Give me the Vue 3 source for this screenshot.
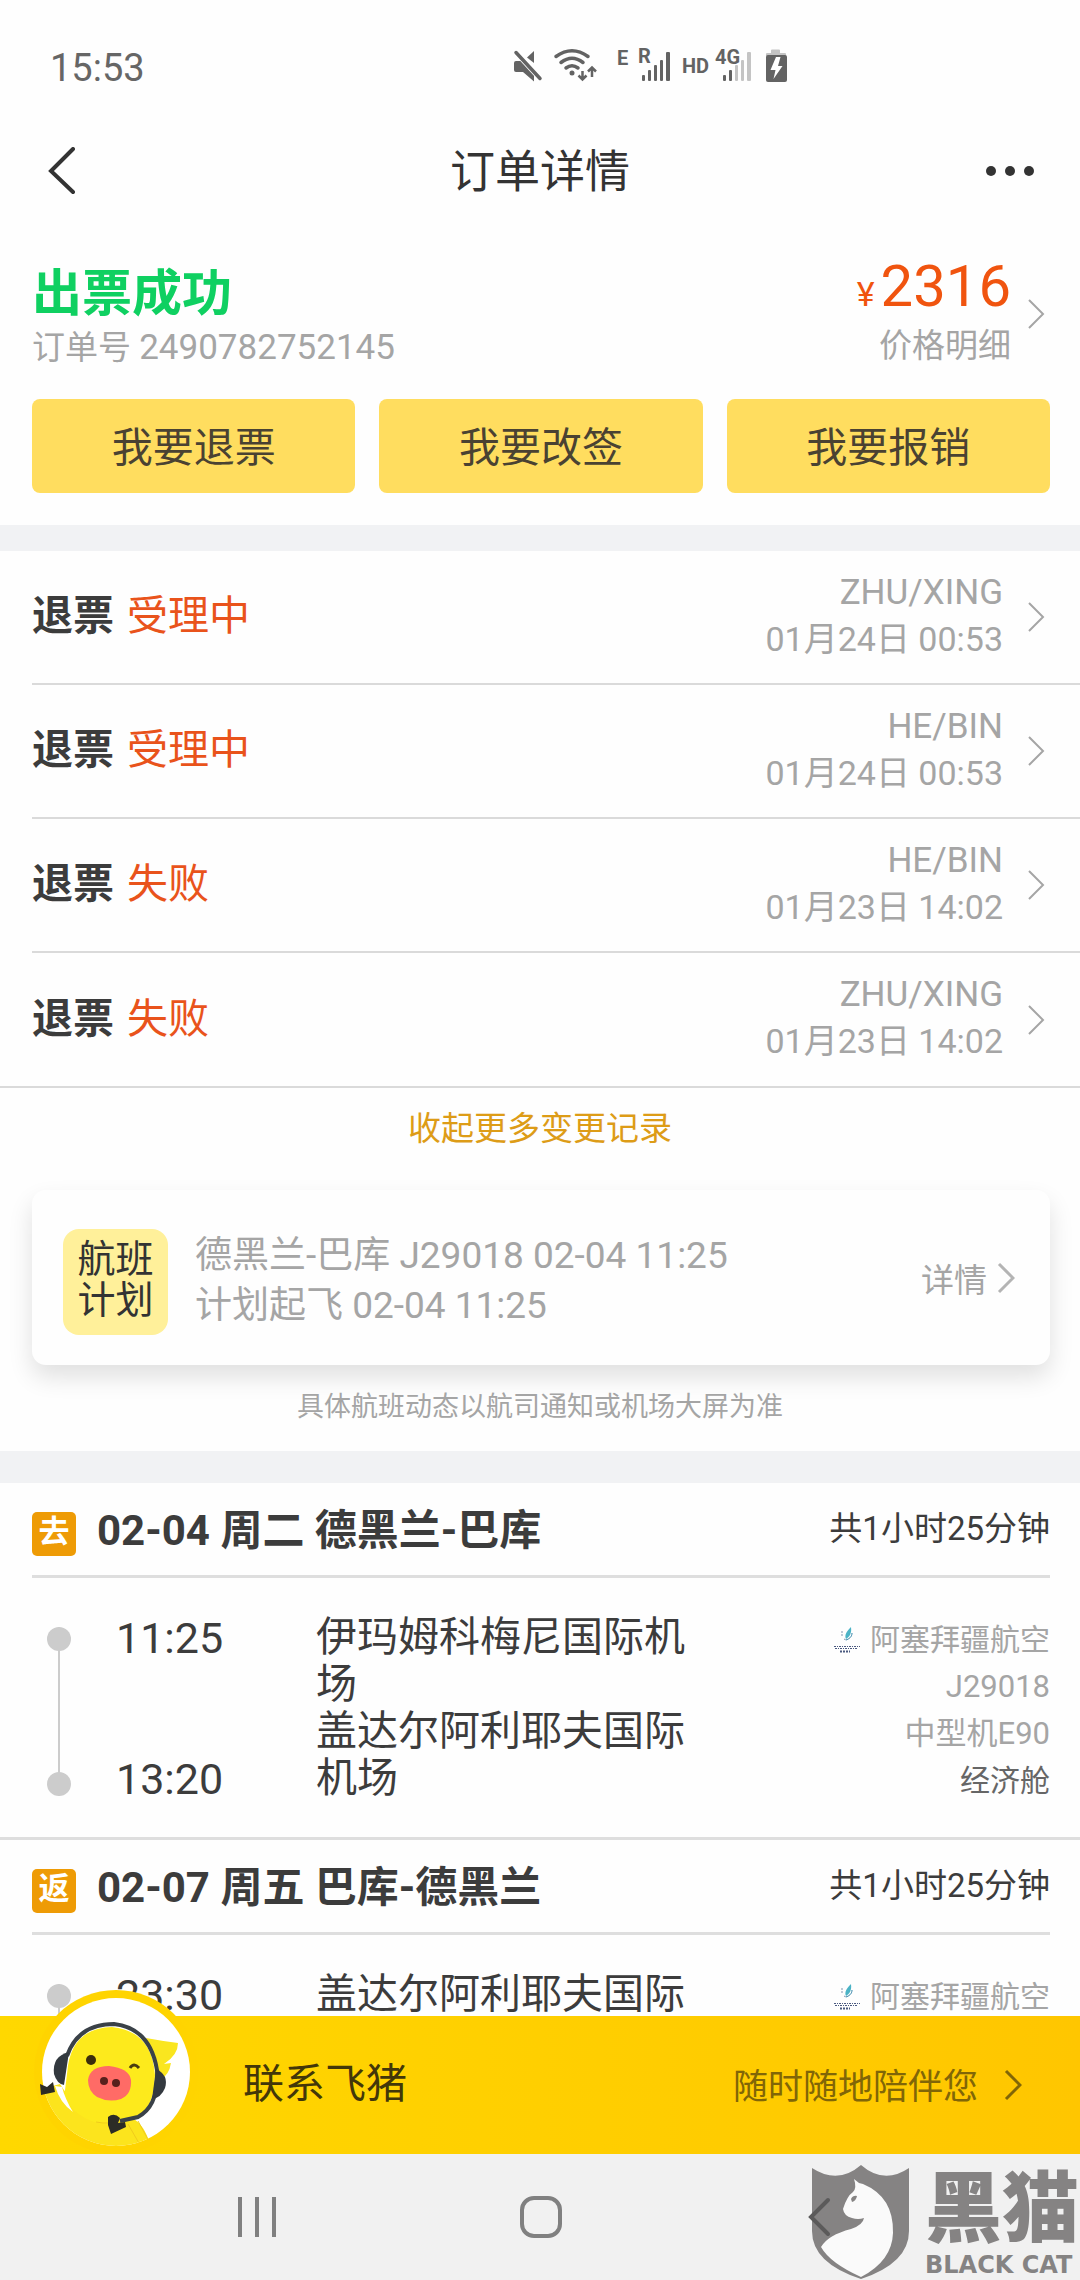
<script setup>
const actions = ['我要退票', '我要改签', '我要报销']

const records = [
  { status: '受理中', name: 'ZHU/XING', time: '01月24日 00:53' },
  { status: '受理中', name: 'HE/BIN', time: '01月24日 00:53' },
  { status: '失败', name: 'HE/BIN', time: '01月23日 14:02' },
  { status: '失败', name: 'ZHU/XING', time: '01月23日 14:02' },
]

const flights = [
  {
    tag: '去',
    title: '02-04 周二 德黑兰-巴库',
    duration: '共1小时25分钟',
    stops: [
      { time: '11:25', airport: '伊玛姆科梅尼国际机场' },
      { time: '13:20', airport: '盖达尔阿利耶夫国际机场' },
    ],
    airline: '阿塞拜疆航空',
    details: ['J29018', '中型机E90'],
    cabin: '经济舱',
  },
  {
    tag: '返',
    title: '02-07 周五 巴库-德黑兰',
    duration: '共1小时25分钟',
    stops: [{ time: '23:30', airport: '盖达尔阿利耶夫国际机场' }],
    airline: '阿塞拜疆航空',
    details: [],
    cabin: '',
  },
]
</script>

<template>
  <div class="screen">
    <div class="status-bar">
      <span class="clock">15:53</span>
      <svg class="indicators" viewBox="0 0 280 40" aria-hidden="true">
        <g fill="#636363">
          <path d="M0 16q0-2 2-2h7L20 25V34.500L9 25H2q-2 0-2-2z" />
          <path d="M20 4v12L13 10.500z" />
          <path d="M3 6L26 31" stroke="#fff" stroke-width="6" />
          <path d="M2 5.500L26 31.500" stroke="#636363" stroke-width="3.500" stroke-linecap="round" />
        </g>
        <g fill="none" stroke="#636363" stroke-width="3.500" stroke-linecap="round">
          <path d="M42 9.500Q58-2 74 9.500" />
          <path d="M47 15.500Q58 7 69 15.500" />
          <path d="M52 21Q58 16.500 64 21" />
        </g>
        <circle cx="58" cy="26" r="2.500" fill="#636363" />
        <g fill="none" stroke="#636363" stroke-width="2.500">
          <path d="M68.500 24v8M64.500 28.500l4 4 4-4M78 30v-9M74 24.500l4-4 4 4" />
        </g>
        <g fill="#c4c4c4">
          <rect x="221" y="18" width="3" height="16" rx="1" />
          <rect x="227" y="13" width="3" height="21" rx="1" />
          <rect x="233" y="5" width="4" height="29" rx="1" />
          <path d="M252 9V7q0-1 1-1h4V3.500q0-1 1-1h7q1 0 1 1V6h5q1 0 1 1v2z" />
        </g>
        <g fill="#636363">
          <text x="103" y="18" class="ind">E</text>
          <text x="124" y="16" class="ind">R</text>
          <text x="168" y="26" class="ind">HD</text>
          <text x="201" y="17" class="ind">4G</text>
          <rect x="128" y="28" width="3" height="6" rx="1" />
          <rect x="134" y="23" width="3" height="11" rx="1" />
          <rect x="140" y="18" width="3" height="16" rx="1" />
          <rect x="146" y="13" width="3" height="21" rx="1" />
          <rect x="152" y="5" width="4" height="29" rx="1" />
          <rect x="209" y="28" width="3" height="6" rx="1" />
          <rect x="215" y="23" width="3" height="11" rx="1" />
        </g>
        <rect x="252" y="8" width="21" height="27" rx="2" fill="#636363" />
        <path d="M262 10l-5.500 13h5L259.500 32 268.500 19h-4.500L266.500 10z" fill="#fff" />
      </svg>
    </div>

    <header class="nav">
      <button class="icon-btn back" aria-label="返回">
        <svg width="28" height="48" viewBox="0 0 28 48"><path d="M25 2L3 24 25 45" /></svg>
      </button>
      <h1>订单详情</h1>
      <button class="icon-btn more" aria-label="更多">
        <svg width="50" height="12" viewBox="0 0 50 12">
          <circle cx="6" cy="6" r="5" /><circle cx="25" cy="6" r="5" /><circle cx="44" cy="6" r="5" />
        </svg>
      </button>
    </header>

    <main class="content">
      <section class="summary">
        <div class="summary-top">
          <div>
            <h2>出票成功</h2>
            <p class="order">订单号 <span>2490782752145</span></p>
          </div>
          <a href="#" class="price-link">
            <span class="price-text">
              <span class="price"><small>¥</small>2316</span>
              <span class="price-label">价格明细</span>
            </span>
            <svg class="chev" viewBox="0 0 18 32"><path d="M2 2l14 14L2 30" /></svg>
          </a>
        </div>
        <div class="actions">
          <button v-for="a in actions" :key="a">{{ a }}</button>
        </div>
      </section>

      <section class="records">
        <a v-for="(r, i) in records" :key="i" href="#" class="record">
          <span class="record-state"><b>退票</b><em>{{ r.status }}</em></span>
          <span class="record-info">
            <span class="passenger">{{ r.name }}</span>
            <span>{{ r.time }}</span>
          </span>
          <svg class="chev" viewBox="0 0 18 32"><path d="M2 2l14 14L2 30" /></svg>
        </a>
      </section>
      <button class="collapse">收起更多变更记录</button>

      <a href="#" class="plan">
        <span class="plan-badge">航班<br />计划</span>
        <span class="plan-text">
          <span>德黑兰-巴库 J29018 02-04 11:25</span>
          <span>计划起飞 02-04 11:25</span>
        </span>
        <span class="plan-more">详情</span>
        <svg class="chev bold" viewBox="0 0 18 32"><path d="M2 2l14 14L2 30" /></svg>
      </a>
      <p class="notice">具体航班动态以航司通知或机场大屏为准</p>

      <section v-for="f in flights" :key="f.tag" class="flight">
        <div class="flight-head">
          <span class="tag">{{ f.tag }}</span>
          <h3>{{ f.title }}</h3>
          <span class="duration">{{ f.duration }}</span>
        </div>
        <div class="flight-body">
          <div class="track"></div>
          <div class="times">
            <span v-for="s in f.stops" :key="s.time">{{ s.time }}</span>
          </div>
          <div class="airports">
            <span v-for="s in f.stops" :key="s.time">{{ s.airport }}</span>
          </div>
          <div class="meta">
            <span class="airline">
              <svg width="28" height="30" viewBox="0 0 28 30" aria-hidden="true">
                <path d="M18 2c-4 4-7 8-5 12 3-2 6-5 5-12z" fill="#4bb3c6" />
                <path d="M19 8c0 4-3 6-6 7" fill="none" stroke="#2b7fa5" />
                <path d="M9 6v6M11 14l2 1" fill="none" stroke="#8095b0" stroke-dasharray="2 1" />
                <path d="M1 21.500h26M2 23.500h23" stroke="#4b5a80" stroke-dasharray="2 1 1 1" />
                <path d="M7 26.500h10" stroke="#4b5a80" stroke-width="2" stroke-dasharray="2 1" />
              </svg>
              {{ f.airline }}
            </span>
            <span v-for="d in f.details" :key="d" class="detail">{{ d }}</span>
            <span v-if="f.cabin" class="cabin">{{ f.cabin }}</span>
          </div>
        </div>
      </section>
    </main>

    <a href="#" class="contact">
      <svg class="avatar" viewBox="0 0 164 164" aria-hidden="true">
        <defs>
          <clipPath id="face"><circle cx="82" cy="82" r="74" /></clipPath>
        </defs>
        <circle cx="82" cy="82" r="82" fill="#ffd400" />
        <circle cx="82" cy="82" r="74" fill="#fff" />
        <g clip-path="url(#face)">
          <path d="M4 100L26 94 42 118 74 132 98 128Q110 134 116 154L90 164 20 164Z" fill="#fce41d" />
          <path d="M112 48q16 3 32 5 0 12-14 21l7-1q-2 12-10 16z" fill="#fae61f" />
          <path d="M33 84Q36 38 78 37q40 4 43 48 0 44-36 49Q50 138 30 108z" fill="#fdea1c" />
          <path d="M21 96q5 17 18 26-8-13-11-25z" fill="#fff" />
          <path d="M94 134l16 28M104 131l14 26M62 132q14 3 26-2" fill="none" stroke="#efcb1c" />
        </g>
        <path d="M33 66Q44 34 80 34q36 4 43 46 2 36-19 47l-18 4" fill="none" stroke="#3a4148" stroke-width="4" />
        <path d="M35 62Q18 66 20 84q3 10 10 11z" fill="#33393f" />
        <path d="M122 79q13 6 9 19-4 10-13 11z" fill="#33393f" />
        <circle cx="57" cy="70" r="5" fill="#3b2d0c" />
        <path d="M96 78q4-6 9 0" fill="none" stroke="#4a3c10" stroke-width="3" />
        <path d="M54 90q2-14 21-14 20 2 22 14 1 14-10 19-12 4-24-2-9-6-9-17z" fill="#ff6b66" />
        <circle cx="70" cy="91" r="4" fill="#57201c" />
        <circle cx="82" cy="93" r="4" fill="#57201c" />
        <path d="M6 94l7 3 6-5 2 10-14 3z" fill="#2c2c26" />
        <path d="M74 127q6-5 12 1l-2 5 7-1 1 5-15 7-3-9z" fill="#2c2c26" />
      </svg>
      <span class="contact-name">联系飞猪</span>
      <span class="contact-slogan">随时随地陪伴您</span>
      <svg class="chev" viewBox="0 0 18 32"><path d="M2 2l14 14L2 30" /></svg>
    </a>

    <footer class="system">
      <button aria-label="最近任务">
        <svg width="40" height="44" viewBox="0 0 40 44"><path d="M3 2v40M20 2v40M37 2v40" /></svg>
      </button>
      <button aria-label="主屏幕">
        <svg width="44" height="44" viewBox="0 0 44 44"><rect x="3" y="3" width="38" height="38" rx="12" /></svg>
      </button>
      <button class="sys-back" aria-label="返回">
        <svg width="28" height="44" viewBox="0 0 28 44"><path d="M24 5L7 22 24 39" /></svg>
      </button>
      <div class="brand">
        <svg width="98" height="114" viewBox="0 0 98 114" aria-hidden="true">
          <path d="M0 3Q26 20 49 0 72 20 97 3V66Q97 98 49 114 0 98 0 66z" fill="#858383" />
          <path d="M42 14l5 4 4 1Q82 32 81 68q-1 28-32 44Q18 98 9 82q7-12 30-18 12-4 13-11-6 2-12 0-8-2-9-9 4-13 10-17 4-4 1-13z" fill="#fafafa" />
          <path d="M39 34q2-4 6-3-1 5-5 6z" fill="#858383" />
        </svg>
        <div class="brand-text">
          <strong>黑猫</strong>
          <span>BLACK CAT</span>
        </div>
      </div>
    </footer>
  </div>
</template>

<style>
body {
  background: #fff;
}
</style>

<style scoped>
* {
  box-sizing: border-box;
}
.screen {
  display: flex;
  flex-direction: column;
  height: 100vh;
  overflow: hidden;
  background: #fefefe;
  color: #3c3c3c;
  font-family: Roboto, "Noto Sans CJK SC", sans-serif;
}
h1, h2, h3, p {
  margin: 0;
}
a {
  color: inherit;
  text-decoration: none;
}
button {
  padding: 0;
  border: 0;
  background: none;
  color: inherit;
  font: inherit;
}
svg {
  display: block;
  flex: none;
}

.status-bar {
  display: flex;
  align-items: center;
  flex: none;
  height: 136px;
  padding: 0 50px;
}
.clock {
  flex: 0 0 464px;
  color: #666;
  font-size: 38px;
}
.indicators {
  width: 280px;
  height: 40px;
  margin-bottom: 2px;
  overflow: visible;
}
.ind {
  font: 700 20px Roboto, sans-serif;
}

.nav {
  display: flex;
  align-items: center;
  justify-content: space-between;
  flex: none;
  height: 72px;
  padding: 0 43px;
}
.nav h1 {
  padding-top: 2px;
  font-size: 45px;
  font-weight: 400;
  line-height: 70px;
  color: #333;
}
.icon-btn {
  width: 52px;
  margin-bottom: 2px;
}
.back {
  padding-left: 5px;
}
.back path {
  fill: none;
  stroke: #333;
  stroke-width: 4;
  stroke-linecap: round;
}
.more circle {
  fill: #333;
}

.content {
  flex: 1;
  min-height: 0;
  overflow: hidden;
}
.chev {
  width: 18px;
  height: 32px;
  fill: none;
  stroke: #a5a5a5;
  stroke-width: 2;
}
.chev.bold {
  stroke: #b4b4b4;
  stroke-width: 3;
}

.summary {
  padding: 54px 30px 32px 32px;
  border-bottom: 26px solid #f1f2f4;
}
.summary-top {
  display: flex;
  justify-content: space-between;
  height: 137px;
}
.summary h2 {
  padding-top: 4px;
  color: #0fd061;
  font-size: 50px;
  line-height: 56px;
}
.order, .price-label {
  color: #a5a5a5;
  font-size: 33px;
  line-height: 52px;
}
.order span {
  font-size: 35px;
}
.price-link {
  display: flex;
  gap: 16px;
  height: 104px;
  align-items: center;
  padding-right: 5px;
}
.price-text {
  display: flex;
  flex-direction: column;
  align-items: flex-end;
  padding-top: 4px;
}
.price {
  color: #f0540f;
  font-size: 58px;
  line-height: 52px;
}
.price small {
  margin-right: 6px;
  font-size: 34px;
}
.actions {
  display: grid;
  grid-template-columns: repeat(3, 1fr);
  gap: 24px;
}
.actions button {
  height: 94px;
  padding-bottom: 4px;
  border-radius: 8px;
  background: #ffdd5f;
  color: #4a4232;
  font-size: 41px;
}

.record {
  display: flex;
  align-items: center;
  height: 134px;
  margin-left: 32px;
  padding-right: 35px;
  border-bottom: 2px solid #dadada;
}
.record:last-child {
  height: 135px;
  margin-left: 0;
  padding-left: 32px;
}
.record-state {
  flex: 1;
  padding-bottom: 10px;
  font-size: 41px;
}
.record-state em {
  margin-left: 13px;
  color: #e9531b;
  font-style: normal;
}
.record-info {
  display: flex;
  flex-direction: column;
  align-items: flex-end;
  margin-right: 24px;
  padding-bottom: 3px;
  color: #a5a5a5;
  font-size: 34px;
  line-height: 47px;
}
.passenger {
  font-size: 35px;
}
.collapse {
  display: block;
  width: 100%;
  height: 76px;
  color: #dd9c17;
  font-size: 33px;
}

.plan {
  display: flex;
  align-items: center;
  height: 175px;
  margin: 26px 30px 0 32px;
  padding: 0 35px 0 31px;
  border-radius: 14px;
  box-shadow: 0 12px 24px rgba(0, 0, 0, .12);
  color: #a5a5a5;
}
.plan-badge {
  width: 105px;
  height: 106px;
  padding-top: 10px;
  margin: 8px 27px 0 0;
  border-radius: 16px;
  background: #fff09a;
  color: #333;
  font-size: 38px;
  line-height: 41px;
  text-align: center;
}
.plan-text {
  display: flex;
  flex: 1;
  flex-direction: column;
  padding-top: 6px;
  font-size: 37px;
  line-height: 50px;
}
.plan-more {
  margin-right: 10px;
  font-size: 33px;
}
.notice {
  padding: 20px 0 22px;
  border-bottom: 32px solid #f1f2f4;
  color: #a5a5a5;
  font-size: 27px;
  line-height: 44px;
  text-align: center;
}

.flight {
  border-bottom: 3px solid #dedede;
}
.flight-head {
  display: flex;
  align-items: center;
  height: 95px;
  margin: 0 30px 0 32px;
  padding-bottom: 6px;
  border-bottom: 3px solid #dedede;
}
.tag {
  width: 44px;
  height: 44px;
  margin: 16px 21px 0 0;
  border-radius: 5px;
  background: #ee9b05;
  color: #fff;
  font-size: 31px;
  font-weight: 700;
  line-height: 40px;
  text-align: center;
}
.flight-head h3 {
  flex: 1;
  font-size: 42px;
}
.duration {
  font-size: 33px;
}
.flight-body {
  display: grid;
  grid-template-columns: 24px 200px 1fr auto;
  height: 259px;
  padding: 36px 30px 0 47px;
}
.track {
  position: relative;
  height: 169px;
  margin-top: 13px;
  background: linear-gradient(#ccc, #ccc) center / 2px 100% no-repeat;
}
.track::before, .track::after {
  content: "";
  position: absolute;
  left: 0;
  width: 24px;
  height: 24px;
  border-radius: 50%;
  background: #ccc;
}
.track::before {
  top: 0;
}
.track::after {
  bottom: 0;
}
.times {
  display: flex;
  flex-direction: column;
  justify-content: space-between;
  height: 189px;
  padding-left: 45px;
  font-size: 43px;
  line-height: 48px;
}
.airports {
  display: flex;
  flex-direction: column;
  width: 370px;
  margin-left: 45px;
  font-size: 41px;
  line-height: 47px;
}
.meta {
  display: flex;
  flex-direction: column;
  align-items: flex-end;
  padding-top: 2px;
  color: #a5a5a5;
  font-size: 30px;
  line-height: 47px;
}
.airline {
  display: flex;
  align-items: center;
  gap: 9px;
}
.detail {
  font-size: 31px;
}
.cabin {
  color: #666;
}

.contact {
  display: flex;
  position: relative;
  align-items: center;
  flex: none;
  height: 138px;
  padding: 0 58px 0 243px;
  background: linear-gradient(90deg, #ffd800, #ffc600);
}
.avatar {
  position: absolute;
  left: 34px;
  bottom: 0;
  width: 164px;
  height: 164px;
}
.contact-name {
  flex: 1;
  padding-bottom: 10px;
  color: #433709;
  font-size: 41px;
}
.contact-slogan {
  margin-right: 26px;
  padding-bottom: 3px;
  color: #816607;
  font-size: 35px;
}
.contact .chev {
  stroke: #816607;
  stroke-width: 3;
}

.system {
  display: flex;
  position: relative;
  align-items: center;
  justify-content: space-between;
  flex: none;
  height: 126px;
  padding: 0 248px 0 237px;
  background: #f1f1f1;
}
.system button svg {
  fill: none;
  stroke: #808080;
  stroke-width: 4;
}
.system .sys-back {
  position: relative;
  z-index: 1;
}
.system .sys-back svg {
  stroke: #5b5a5a;
  stroke-linecap: round;
}
.brand {
  display: flex;
  position: absolute;
  right: 1px;
  bottom: 1px;
  gap: 15px;
  color: #858383;
}
.brand-text {
  display: flex;
  flex-direction: column;
}
.brand strong {
  font-size: 77px;
  font-weight: 900;
  line-height: 90px;
}
.brand span {
  font: 700 24px/20px "DejaVu Sans", sans-serif;
}
</style>
